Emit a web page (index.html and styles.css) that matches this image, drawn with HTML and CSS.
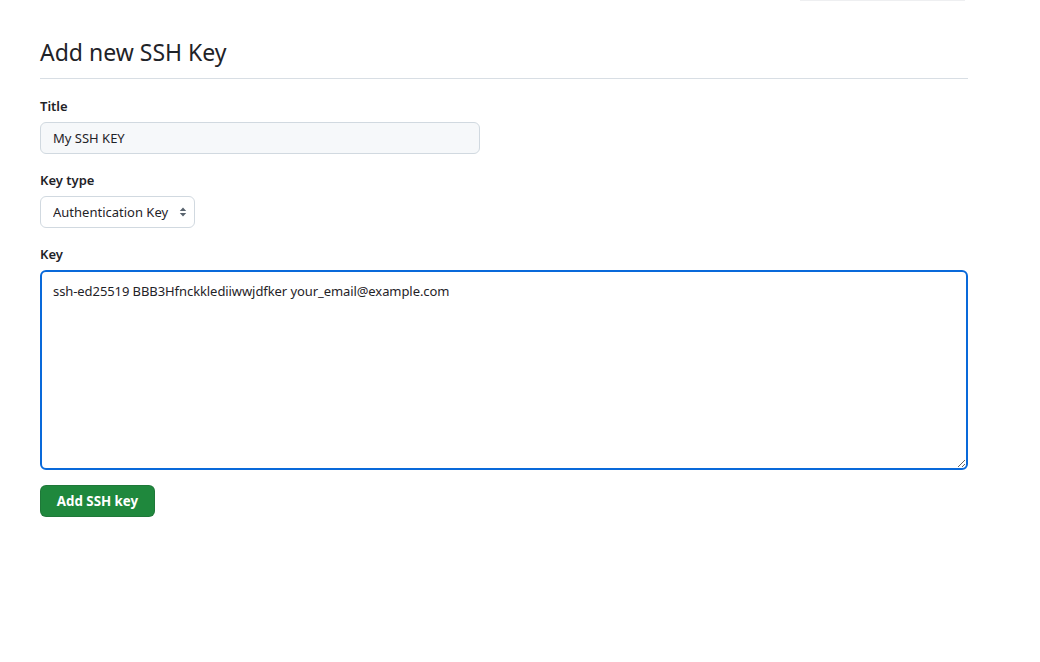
FILE: index.html
```html
<!DOCTYPE html>
<html>
<head>
<meta charset="utf-8">
<link rel="stylesheet" href="styles.css">
</head>
<body>
<div class="topbar"><div class="topline"></div></div>
<main class="page">
  <div class="subhead">
    <h2 class="subhead-heading">Add new SSH Key</h2>
  </div>
  <form class="form">
    <div class="form-group">
      <label class="label" for="title">Title</label>
      <input class="input input-title" id="title" type="text" value="My SSH KEY">
    </div>
    <div class="form-group">
      <label class="label" for="type">Key type</label>
      <div class="select-wrap">
        <select class="select" id="type">
          <option>Authentication Key</option>
        </select>
        <svg class="select-arrow" width="8" height="12" viewBox="0 0 8 12"><path d="M4 1.5 L7.2 5 H0.8 Z M4 10.5 L7.2 7 H0.8 Z" fill="#59636e"/></svg>
      </div>
    </div>
    <div class="form-group">
      <label class="label" for="key">Key</label>
      <textarea class="textarea" id="key">ssh-ed25519 BBB3Hfnckklediiwwjdfker your_email@example.com</textarea>
    </div>
    <button class="btn-primary" type="button">Add SSH key</button>
  </form>
</main>
</body>
</html>
```

FILE: styles.css
```css
* { box-sizing: border-box; }
html, body { margin: 0; padding: 0; background: #ffffff; }
body {
  font-family: "Noto Sans", "Open Sans", sans-serif;
  color: #1f2328;
  font-size: 13px;
}
.topbar {
  display: flex;
  justify-content: flex-end;
  padding-right: 75px;
  height: 1px;
}
.topline {
  width: 165px;
  height: 1px;
  background: #eeeff1;
}
.page {
  width: 928px;
  margin-left: 40px;
  padding-top: 33px;
}
.subhead {
  border-bottom: 1px solid #d8dee4;
  padding-bottom: 8px;
  margin-bottom: 17px;
}
.subhead-heading {
  margin: 0;
  font-size: 23px;
  font-weight: 400;
  line-height: 36px;
}
.form { display: flex; flex-direction: column; align-items: flex-start; }
.form-group {
  display: flex;
  flex-direction: column;
  align-items: flex-start;
  gap: 6px;
  margin-bottom: 16px;
  width: 100%;
}
.label {
  font-weight: 600;
  font-size: 13px;
  line-height: 20px;
}
.input {
  font-family: inherit;
  font-size: 13px;
  color: #1f2328;
  height: 32px;
  padding: 5px 12px;
  border: 1px solid #d1d9e0;
  border-radius: 6px;
  background: #f6f8fa;
  outline: none;
}
.input-title { width: 440px; }
.select-wrap { position: relative; }
.select {
  appearance: none;
  -webkit-appearance: none;
  font-family: inherit;
  font-size: 13px;
  color: #1f2328;
  height: 32px;
  width: 155px;
  padding: 0 20px 0 12px;
  border: 1px solid #d1d9e0;
  border-radius: 6px;
  background: #ffffff;
}
.select-arrow {
  position: absolute;
  right: 8px;
  top: 10px;
  pointer-events: none;
}
.textarea {
  width: 928px;
  height: 200px;
  font-family: inherit;
  font-size: 13px;
  line-height: 20px;
  letter-spacing: -0.08px;
  color: #1f2328;
  padding: 9px 11px;
  border: 2px solid #0969da;
  border-radius: 6px;
  outline: none;
  resize: vertical;
}
.btn-primary {
  font-family: inherit;
  font-size: 13.3px;
  font-weight: 700;
  color: #ffffff;
  background: #1f883d;
  border: 1px solid rgba(31, 35, 40, 0.15);
  border-radius: 6px;
  height: 32px;
  width: 115px;
  padding: 0;
  white-space: nowrap;
  margin-top: -1px;
}
```
